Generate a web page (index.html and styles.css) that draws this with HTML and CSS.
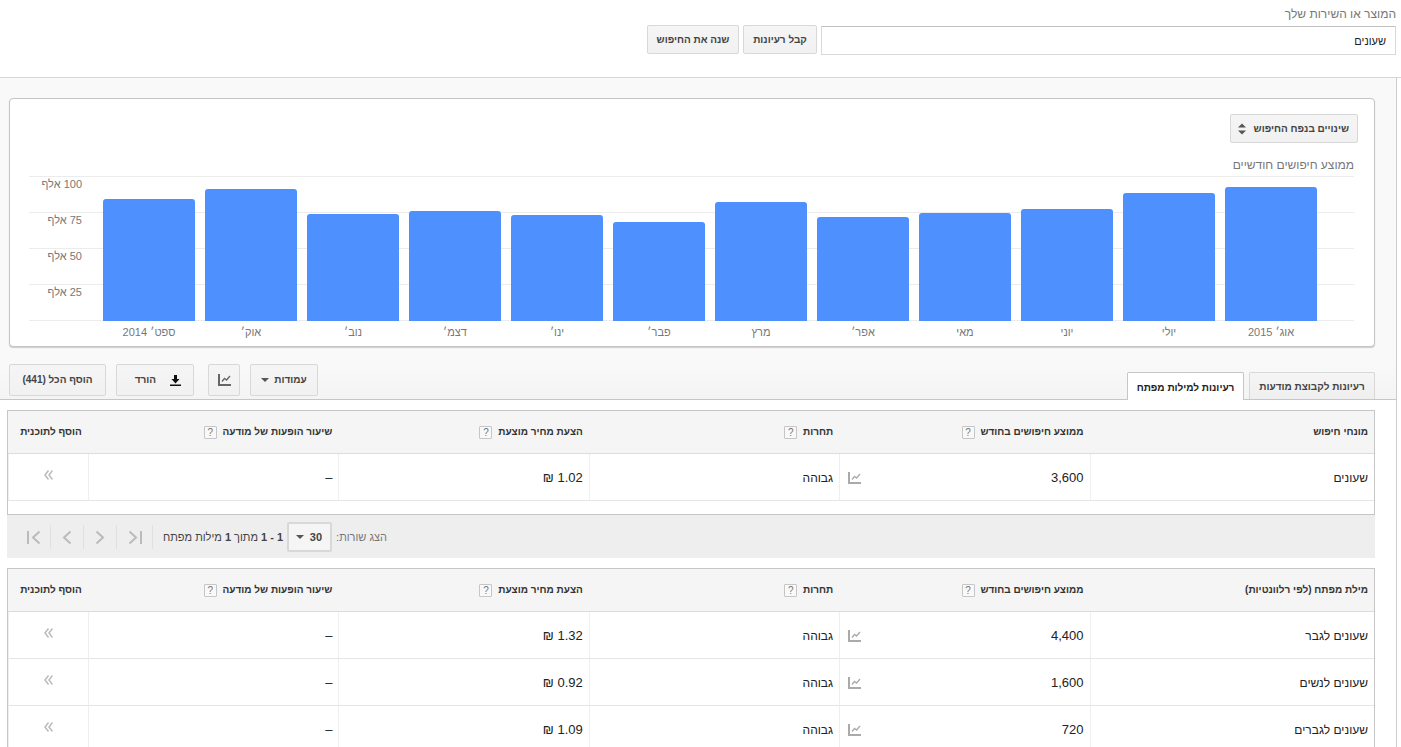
FILE: index.html
```html
<!DOCTYPE html>
<html lang="he" dir="rtl">
<head>
<meta charset="utf-8">
<title>תכנון מילות מפתח</title>
<link rel="stylesheet" href="styles.css">
</head>
<body>
<svg class="sprite" aria-hidden="true">
  <symbol id="trend" viewBox="0 0 13 12">
    <path d="M1 0v11h12" fill="none" stroke="currentColor" stroke-width="2"/>
    <path d="M4 7.500L6.500 4.500L8.500 6L12 2" fill="none" stroke="currentColor" stroke-width="1.300"/>
  </symbol>
  <symbol id="caret" viewBox="0 0 8 4"><path d="M0 0h8L4 4z" fill="currentColor"/></symbol>
  <symbol id="sort" viewBox="0 0 8 12"><path d="M0 4.500L4 0.500L8 4.500zM0 7.500h8L4 11.500z" fill="currentColor"/></symbol>
  <symbol id="download" viewBox="0 0 11 12"><path d="M4 1h3v4h2.500L5.500 9.500L1.500 5H4zM0 10.500h11v1.500H0z" fill="currentColor"/></symbol>
  <symbol id="first" viewBox="0 0 14 14"><path d="M1 1v13M12.500 1.500L6 7.500l6.500 6" fill="none" stroke="currentColor" stroke-width="2"/></symbol>
  <symbol id="prev" viewBox="0 0 14 14"><path d="M10.500 1.500L4 7.500l6.500 6" fill="none" stroke="currentColor" stroke-width="2"/></symbol>
  <symbol id="next" viewBox="0 0 14 14"><path d="M3.500 1.500L10 7.500l-6.500 6" fill="none" stroke="currentColor" stroke-width="2"/></symbol>
  <symbol id="last" viewBox="0 0 14 14"><path d="M13 1v13M1.500 1.500L8 7.500l-6.500 6" fill="none" stroke="currentColor" stroke-width="2"/></symbol>
  <symbol id="add" viewBox="0 0 9 10"><path d="M4.500 0.500L1 5l3.500 4.500M8.500 0.500L5 5l3.500 4.500" fill="none" stroke="currentColor" stroke-width="1.500"/></symbol>
</svg>

<header class="search">
  <label class="search-label" for="product">המוצר או השירות שלך</label>
  <div class="search-row">
    <input class="search-input" id="product" type="text" value="שעונים">
    <button class="btn btn-get" type="button">קבל רעיונות</button>
    <button class="btn btn-change" type="button">שנה את החיפוש</button>
  </div>
</header>

<main class="main">
  <section class="card">
    <div class="picker chart-picker">
      <select aria-label="סוג תרשים"><option>שינויים בנפח החיפוש</option></select>
      <svg class="icon-sort"><use href="#sort"/></svg>
    </div>
    <h2 class="chart-title">ממוצע חיפושים חודשיים</h2>
    <div class="chart">
      <div class="scale">
        <div class="tick"><span dir="rtl">100 אלף</span></div>
        <div class="tick"><span dir="rtl">75 אלף</span></div>
        <div class="tick"><span dir="rtl">50 אלף</span></div>
        <div class="tick"><span dir="rtl">25 אלף</span></div>
        <div class="tick base"></div>
      </div>
      <div class="bars">
        <div class="bar" style="height:122px"></div>
        <div class="bar" style="height:132px"></div>
        <div class="bar" style="height:107px"></div>
        <div class="bar" style="height:110px"></div>
        <div class="bar" style="height:106px"></div>
        <div class="bar" style="height:99px"></div>
        <div class="bar" style="height:119px"></div>
        <div class="bar" style="height:104px"></div>
        <div class="bar" style="height:108px"></div>
        <div class="bar" style="height:112px"></div>
        <div class="bar" style="height:128px"></div>
        <div class="bar" style="height:134px"></div>
      </div>
      <div class="months">
        <span dir="rtl">ספט׳ 2014</span><span dir="rtl">אוק׳</span><span dir="rtl">נוב׳</span><span dir="rtl">דצמ׳</span><span dir="rtl">ינו׳</span><span dir="rtl">פבר׳</span><span dir="rtl">מרץ</span><span dir="rtl">אפר׳</span><span dir="rtl">מאי</span><span dir="rtl">יוני</span><span dir="rtl">יולי</span><span dir="rtl">אוג׳ 2015</span>
      </div>
    </div>
  </section>

  <div class="toolbar">
    <div class="tabs" role="tablist">
      <button class="tab" type="button" role="tab" aria-selected="false">רעיונות לקבוצת מודעות</button>
      <button class="tab active" type="button" role="tab" aria-selected="true">רעיונות למילות מפתח</button>
    </div>
    <div class="tools">
      <button class="btn tool tool-columns" type="button">עמודות <svg class="icon-caret"><use href="#caret"/></svg></button>
      <button class="btn tool tool-trend" type="button" aria-label="תרשים"><svg class="icon-trend"><use href="#trend"/></svg></button>
      <button class="btn tool tool-download" type="button"><svg class="icon-download"><use href="#download"/></svg> הורד</button>
      <button class="btn tool tool-add" type="button">הוסף הכל (441)</button>
    </div>
  </div>

  <div class="results">
    <div class="panel terms">
      <table class="grid">
        <colgroup><col><col class="c-data"><col class="c-data"><col class="c-data"><col class="c-data"><col class="c-add"></colgroup>
        <thead><tr>
          <th>מונחי חיפוש</th>
          <th>ממוצע חיפושים בחודש <button class="help" type="button">?</button></th>
          <th>תחרות <button class="help" type="button">?</button></th>
          <th>הצעת מחיר מוצעת <button class="help" type="button">?</button></th>
          <th>שיעור הופעות של מודעה <button class="help" type="button">?</button></th>
          <th>הוסף לתוכנית</th>
        </tr></thead>
        <tbody>
          <tr><td class="word">שעונים</td><td><div class="volume">3,600 <svg class="icon-trend"><use href="#trend"/></svg></div></td><td class="word">גבוהה</td><td>1.02 ₪</td><td>–</td><td class="add"><button type="button" aria-label="הוסף"><svg class="icon-add"><use href="#add"/></svg></button></td></tr>
        </tbody>
      </table>
    </div>

    <nav class="pager">
      <label class="rows-label" for="rows">הצג שורות:</label>
      <div class="picker rows-picker">
        <select id="rows"><option>30</option></select>
        <svg class="icon-caret"><use href="#caret"/></svg>
      </div>
      <p class="range"><b>1 - 1</b> מתוך <b>1</b> מילות מפתח</p>
      <div class="pages">
        <button type="button" aria-label="אחרון"><svg><use href="#last"/></svg></button>
        <button type="button" aria-label="הבא"><svg><use href="#next"/></svg></button>
        <button type="button" aria-label="הקודם"><svg><use href="#prev"/></svg></button>
        <button type="button" aria-label="ראשון"><svg><use href="#first"/></svg></button>
      </div>
    </nav>

    <div class="panel">
      <table class="grid">
        <colgroup><col><col class="c-data"><col class="c-data"><col class="c-data"><col class="c-data"><col class="c-add"></colgroup>
        <thead><tr>
          <th>מילת מפתח (לפי רלוונטיות)</th>
          <th>ממוצע חיפושים בחודש <button class="help" type="button">?</button></th>
          <th>תחרות <button class="help" type="button">?</button></th>
          <th>הצעת מחיר מוצעת <button class="help" type="button">?</button></th>
          <th>שיעור הופעות של מודעה <button class="help" type="button">?</button></th>
          <th>הוסף לתוכנית</th>
        </tr></thead>
        <tbody>
          <tr><td class="word">שעונים לגבר</td><td><div class="volume">4,400 <svg class="icon-trend"><use href="#trend"/></svg></div></td><td class="word">גבוהה</td><td>1.32 ₪</td><td>–</td><td class="add"><button type="button" aria-label="הוסף"><svg class="icon-add"><use href="#add"/></svg></button></td></tr>
          <tr><td class="word">שעונים לנשים</td><td><div class="volume">1,600 <svg class="icon-trend"><use href="#trend"/></svg></div></td><td class="word">גבוהה</td><td>0.92 ₪</td><td>–</td><td class="add"><button type="button" aria-label="הוסף"><svg class="icon-add"><use href="#add"/></svg></button></td></tr>
          <tr><td class="word">שעונים לגברים</td><td><div class="volume">720 <svg class="icon-trend"><use href="#trend"/></svg></div></td><td class="word">גבוהה</td><td>1.09 ₪</td><td>–</td><td class="add"><button type="button" aria-label="הוסף"><svg class="icon-add"><use href="#add"/></svg></button></td></tr>
        </tbody>
      </table>
    </div>
  </div>
</main>
</body>
</html>
```

FILE: styles.css
```css
* { box-sizing: border-box; }

body {
  margin: 0;
  height: 100vh;
  overflow: hidden;
  display: flex;
  flex-direction: column;
  background: #fff;
  color: #222;
  font: 13px/16px "Liberation Sans", Arial, sans-serif;
}

button, input, select { font: inherit; color: inherit; margin: 0; }
button { cursor: pointer; }
svg { display: block; flex: none; }
.sprite { display: none; }

/* Search header */
.search {
  flex: none;
  padding: 6px 5px 22px;
  border-bottom: 1px solid #d6d6d6;
}
.search-label { display: block; color: #777; font-size: 12px; margin-bottom: 3px; }
.search-row { display: flex; align-items: flex-start; gap: 4px; }
.search-input {
  width: 575px;
  height: 29px;
  margin-top: 1px;
  padding: 0 9px;
  border: 1px solid #d9d9d9;
  border-top-color: #c0c0c0;
  background: #fff;
  font-size: 11px;
}

.btn {
  height: 29px;
  padding: 0 8px;
  border: 1px solid #d8d8d8;
  border-radius: 2px;
  background: linear-gradient(#f5f5f5, #f1f1f1);
  color: #444;
  font-size: 10px;
  font-weight: bold;
  white-space: nowrap;
}
.btn-get { min-width: 74px; }
.btn-change { min-width: 92px; }

/* Main area */
.main {
  flex: 1;
  min-height: 0;
  margin-right: 4px;
  border-right: 1px solid #ccc;
  padding-top: 20px;
  background: #f9f9f9;
  display: flex;
  flex-direction: column;
}

.card {
  flex: none;
  margin: 0 21px 0 9px;
  padding: 15px 16px 7px 19px;
  border: 1px solid #c6c6c6;
  border-radius: 4px;
  box-shadow: 0 1px 1px #ccc;
  background: #fff;
}

.picker { display: grid; align-items: center; justify-items: end; width: max-content; }
.picker select, .picker svg { grid-area: 1 / 1; }
.picker svg { pointer-events: none; color: #555; }
.picker select {
  appearance: none;
  border: 1px solid #d8d8d8;
  border-radius: 2px;
  background: linear-gradient(#f5f5f5, #f1f1f1);
  color: #444;
  font-size: 11px;
  font-weight: bold;
}
.chart-picker select { width: 128px; height: 29px; padding: 0 8px; font-size: 10px; }
.icon-sort { width: 8px; height: 12px; margin-left: 8px; }
.icon-caret { width: 8px; height: 4px; color: #555; }

.chart-title { margin: 14px 4px 3px; font-size: 12px; font-weight: normal; color: #777; }

.chart { direction: ltr; display: grid; margin-right: 4px; font: 11px/14px "Liberation Sans", Arial, sans-serif; color: #777; }
.scale, .bars { grid-area: 1 / 1; }
.tick { height: 36px; border-top: 1px solid #ececec; }
.tick.base { height: 1px; }
.tick span { display: block; width: 53px; text-align: right; }
.bars, .months { display: grid; grid-template-columns: repeat(12, 1fr); gap: 10px; padding: 0 37px 0 74px; }
.bars { align-items: end; z-index: 1; }
.bar { background: #4d90fe; border-radius: 3px 3px 0 0; }
.months { margin-top: 4px; text-align: center; }

/* Tabs and tools */
.toolbar {
  flex: none;
  margin-top: 17px;
  padding: 0 21px 0 9px;
  height: 36px;
  border-bottom: 1px solid #c6c6c6;
  display: flex;
  justify-content: space-between;
  background: linear-gradient(#f9f9f9, #f4f4f4);
}
.tabs { display: flex; align-items: flex-end; gap: 5px; }
.tab {
  height: 27px;
  padding: 2px 8px 0;
  border: 1px solid #d8d8d8;
  border-bottom: 0;
  border-radius: 2px 2px 0 0;
  background: linear-gradient(#f5f5f5, #efefef);
  color: #444;
  font-size: 10px;
  font-weight: bold;
  white-space: nowrap;
  min-width: 126px;
}
.tab.active { min-width: 117px; height: 28px; margin-bottom: -1px; border-color: #c6c6c6; background: #fff; color: #222; }
.tools { display: flex; gap: 10px; }
.tool { height: 32px; display: flex; align-items: center; justify-content: center; }
.tool-columns { width: 68px; gap: 5px; }
.tool-trend { width: 32px; margin-left: 4px; color: #666; }
.tool-download { width: 78px; gap: 14px; justify-content: flex-start; padding: 0 12px; }
.tool-add { width: 97px; }
.icon-trend { width: 13px; height: 12px; }
.icon-download { width: 11px; height: 12px; color: #111; }

/* Result tables */
.results { flex: 1; min-height: 0; padding: 10px 21px 0 7px; background: #fff; }
.panel { border: 1px solid #c6c6c6; }
.terms { padding-bottom: 13px; }
.grid { width: 100%; table-layout: fixed; border-collapse: separate; border-spacing: 0; }
.c-data { width: 18.33%; }
.c-add { width: 80px; }
.grid th {
  height: 43px;
  padding: 0 6px;
  border-bottom: 1px solid #dcdcdc;
  background: #f5f5f5;
  color: #333;
  font-size: 10px;
  text-align: right;
  white-space: nowrap;
}
.grid th:last-child { text-align: center; padding-right: 0; }
.grid td {
  height: 47px;
  padding: 2px 6px 0;
  border-bottom: 1px solid #e5e5e5;
  border-left: 1px solid #efefef;
}
.grid td.word { font-size: 12px; }
.volume { display: flex; align-items: center; justify-content: space-between; }
.volume .icon-trend { margin-left: 2px; color: #aaa; }
.help {
  width: 13px;
  height: 13px;
  margin-right: 3px;
  padding: 0;
  border: 1px solid #c6c6c6;
  border-radius: 1px;
  background: #f9f9f9;
  color: #777;
  font-size: 10px;
  font-weight: normal;
  line-height: 11px;
  vertical-align: middle;
}
.add button { display: block; margin: 0 auto; padding: 0 0 6px; border: 0; background: none; color: #bbb; }
.icon-add { width: 9px; height: 10px; }

/* Pager */
.pager {
  height: 43px;
  margin-bottom: 10px;
  padding-left: 11px;
  background: #eee;
  display: flex;
  align-items: center;
  justify-content: flex-end;
  font-size: 11px;
}
.rows-label { color: #777; margin-left: 4px; }
.rows-picker select { width: 45px; height: 30px; padding: 0 8px; border: 2px solid #d8d8d8; background: #f5f5f5; }
.rows-picker .icon-caret { margin-left: 9px; }
.range { margin: 0 4px 0 10px; color: #444; }
.pages { display: flex; }
.pages button { width: 33px; height: 24px; padding: 0; border: 0; border-right: 1px solid #e0e0e0; background: none; color: #bbb; display: grid; place-items: center; }
.pages button:first-child { width: 36px; }
.pages svg { width: 14px; height: 14px; }
```
